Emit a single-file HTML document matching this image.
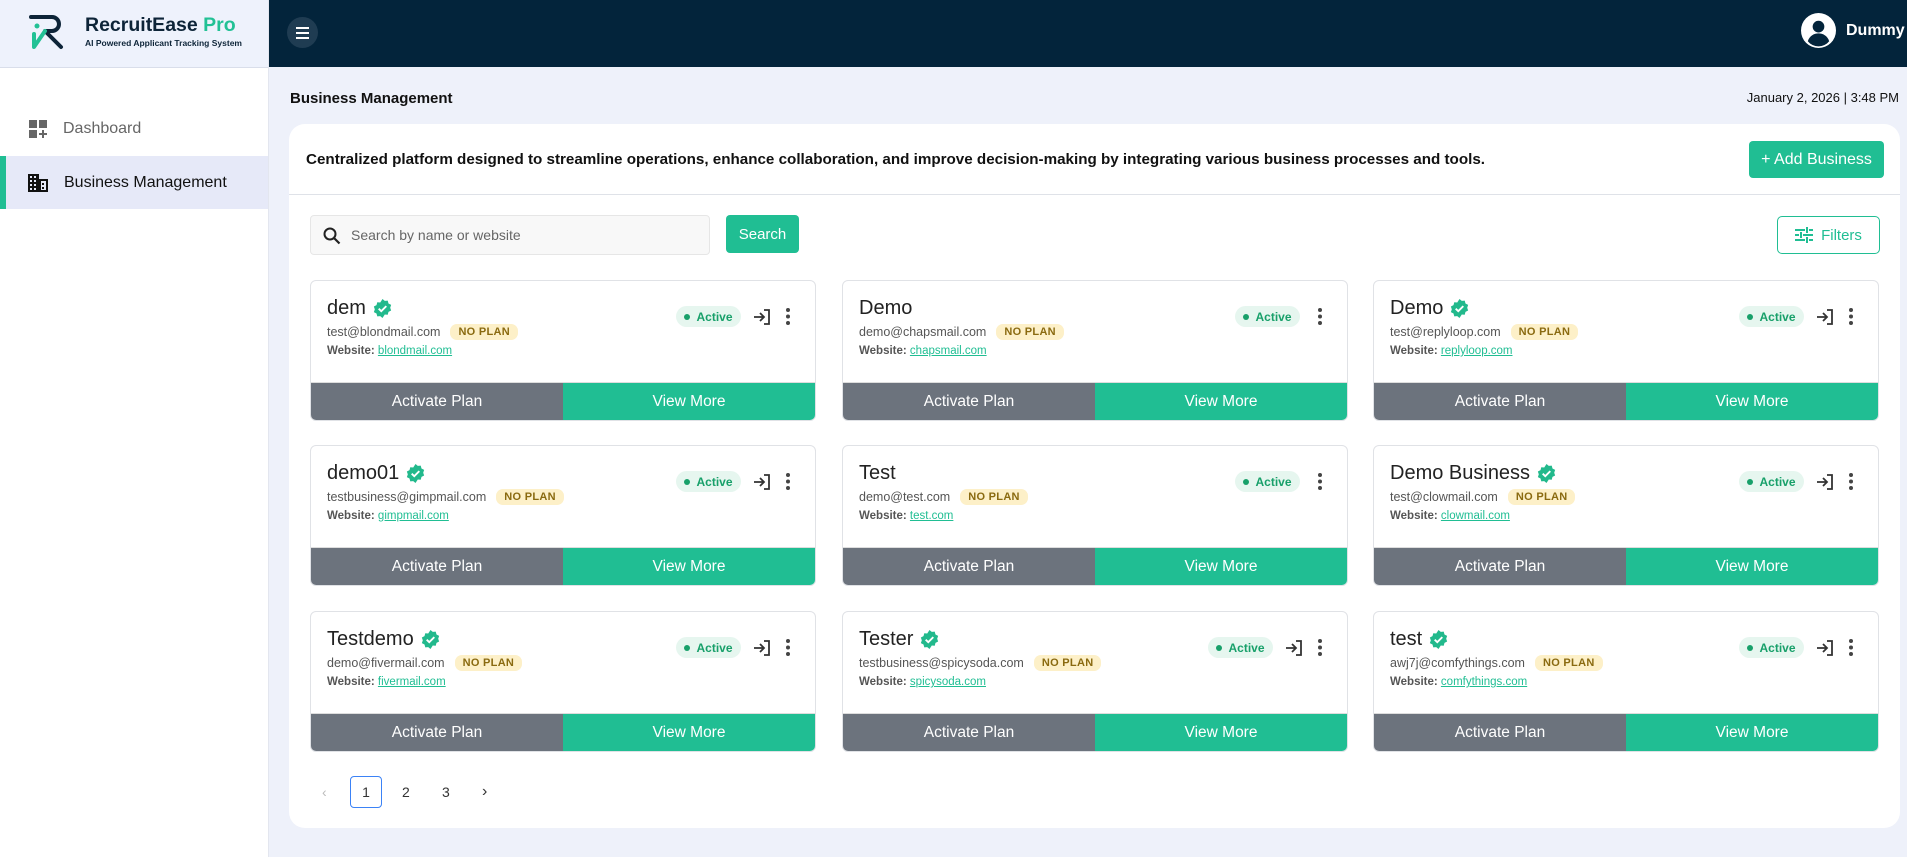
<!DOCTYPE html>
<html><head><meta charset="utf-8">
<style>
*{box-sizing:border-box;margin:0;padding:0}
body{width:1907px;height:857px;overflow:hidden;background:#eef1fa;font-family:"Liberation Sans",sans-serif;position:relative;color:#111}
.side{position:absolute;left:0;top:0;width:269px;height:857px;background:#fff;border-right:1px solid #e3e6ef}
.logo{height:68px;background:#eef2fc;border-bottom:1px solid #d9deea;position:relative}
.brand{position:absolute;left:85px;top:14px;font-weight:bold;font-size:19.5px;color:#0d2438}
.brand span{color:#22c195}
.sub{position:absolute;left:85px;top:38px;font-size:8.5px;color:#0d2438;font-weight:bold}
.nav{position:absolute;left:0;width:268px;height:53px;display:flex;align-items:center;font-size:16px}
.top{position:absolute;left:269px;top:0;right:0;height:67px;background:#03243b}
.ham{position:absolute;left:18px;top:17px;width:31px;height:31px;border-radius:50%;background:#1f3c52}
.ham i{position:absolute;left:9px;width:13px;height:2px;background:#fff}
.title{position:absolute;left:290px;top:90px;font-size:15px;font-weight:bold}
.date{position:absolute;right:8px;top:90px;font-size:13px}
.main{position:absolute;left:289px;top:124px;width:1611px;height:704px;background:#fff;border-radius:16px}
.desc{position:absolute;left:17px;top:27px;font-size:15.2px;font-weight:bold}
.add{position:absolute;left:1460px;top:17px;width:135px;height:37px;background:#20be93;color:#fff;border-radius:4px;font-size:16px;display:flex;align-items:center;justify-content:center}
.hr{position:absolute;left:0;right:0;top:70px;height:1px;background:#dfe2e8}
.search{position:absolute;left:21px;top:91px;width:400px;height:40px;background:#f8f8f8;border:1px solid #e6e6e6;border-radius:4px;font-size:14px;color:#666;padding-left:40px;line-height:38px}
.sbtn{position:absolute;left:437px;top:91px;width:73px;height:38px;background:#20be93;color:#fff;border-radius:4px;font-size:15px;display:flex;align-items:center;justify-content:center}
.filt{position:absolute;left:1488px;top:92px;width:103px;height:38px;border:1px solid #20be93;border-radius:5px;color:#20be93;font-size:15px;display:flex;align-items:center;justify-content:center;gap:8px}
.card{position:absolute;width:506px;height:141px;border:1px solid #e0e2e6;border-radius:6px;background:#fff;overflow:hidden}
.card .n{position:absolute;left:16px;top:16px;font-size:20px;color:#222;display:flex;align-items:center;gap:7px}
.card .e{position:absolute;left:16px;top:43px;font-size:12.5px;color:#555;display:flex;align-items:center;gap:10px}
.np{background:#fdf0c8;color:#8a6a10;font-size:11px;font-weight:bold;padding:2px 8px;border-radius:7px;letter-spacing:.3px}
.card .w{position:absolute;left:16px;top:64px;font-size:11.5px;color:#555}
.card .w b{color:#555}
.card .w u{color:#20be93}
.pill{position:absolute;top:25px;width:65px;height:21px;background:#e6f6ef;color:#18a06a;border-radius:11px;font-size:12px;font-weight:bold;display:flex;align-items:center;justify-content:center;gap:6px}
.pill i{width:6px;height:6px;border-radius:50%;background:#18a06a}
.btns{position:absolute;left:0;right:0;bottom:0;height:38px;display:flex;border-top:1px solid #ddd}
.btns div{flex:1;display:flex;align-items:center;justify-content:center;color:#fff;font-size:15.5px}
.a{background:#6c737d}.v{background:#20be93}
.pg{position:absolute;font-size:14px;color:#333}
</style></head><body>
<div class="side">
 <div class="logo">
  <svg style="position:absolute;left:28px;top:14px" width="42" height="36" viewBox="0 0 42 36"><path d="M3 3H24a7 7 0 0 1 0 14H17L33 33" fill="none" stroke="#0d2438" stroke-width="4" stroke-linecap="round" stroke-linejoin="round"/><path d="M6 20V33L17 17" fill="none" stroke="#22c195" stroke-width="4" stroke-linecap="round" stroke-linejoin="round"/><circle cx="9" cy="12" r="2.5" fill="#22c195"/></svg>
  <div class="brand">RecruitEase <span>Pro</span></div>
  <div class="sub">AI Powered Applicant Tracking System</div>
 </div>
 <div class="nav" style="top:102px;color:#666">
  <svg style="margin-left:29px" width="18" height="18" viewBox="0 0 18 18" fill="#666"><rect x="0" y="0" width="8" height="8"/><rect x="10" y="0" width="8" height="8"/><rect x="0" y="10" width="8" height="8"/><path d="M13 10h2v3h3v2h-3v3h-2v-3h-3v-2h3z"/></svg>
  <span style="margin-left:16px">Dashboard</span></div>
 <div class="nav" style="top:156px;background:#e6e9f8;border-left:6px solid #20be93;color:#111">
  <svg style="margin-left:22px" width="20" height="18" viewBox="0 0 20 18" fill="#111"><path d="M0 0h11v5h9v13H0z"/><g fill="#e6e9f8"><rect x="2" y="2" width="2" height="2"/><rect x="6" y="2" width="2" height="2"/><rect x="2" y="6" width="2" height="2"/><rect x="6" y="6" width="2" height="2"/><rect x="2" y="10" width="2" height="2"/><rect x="6" y="10" width="2" height="2"/><rect x="2" y="14" width="2" height="2"/><rect x="6" y="14" width="2" height="2"/><rect x="13" y="7" width="5" height="9"/></g><rect x="14" y="9" width="2" height="2"/><rect x="14" y="13" width="2" height="2"/></svg>
  <span style="margin-left:16px">Business Management</span></div>
</div>
<div class="top">
 <div class="ham"><i style="top:10px"></i><i style="top:15px"></i><i style="top:20px"></i></div>
 <svg style="position:absolute;left:1532px;top:13px" width="35" height="35" viewBox="0 0 36 36"><circle cx="18" cy="18" r="18" fill="#fff"/><circle cx="18" cy="14" r="6" fill="#03243b"/><path d="M7 29c2-6 7-8 11-8s9 2 11 8a14 14 0 0 1-22 0z" fill="#03243b"/></svg>
 <div style="position:absolute;left:1577px;top:22px;color:#fff;font-weight:bold;font-size:16px">Dummy</div>
</div>
<div class="title">Business Management</div>
<div class="date">January 2, 2026 | 3:48 PM</div>
<div class="main">
 <div class="desc">Centralized platform designed to streamline operations, enhance collaboration, and improve decision-making by integrating various business processes and tools.</div>
 <div class="add">+ Add Business</div>
 <div class="hr"></div>
 <div class="search"><svg style="position:absolute;left:12px;top:11px" width="18" height="18" viewBox="0 0 18 18"><circle cx="7" cy="7" r="5.5" fill="none" stroke="#222" stroke-width="2"/><path d="M11 11l5.5 5.5" stroke="#222" stroke-width="2.2"/></svg>Search by name or website</div>
 <div class="sbtn">Search</div>
 <div class="filt"><svg width="18" height="16" viewBox="0 0 18 16" stroke="#20be93" stroke-width="2"><path d="M0 3h10M14 3h4M12 0v6M0 8h4M8 8h10M6 5v6M0 13h10M14 13h4M12 10v6"/></svg>Filters</div>
</div>
<div id="cards"></div>
<div class="pg" style="left:322px;top:784px;color:#bbb">&lsaquo;</div>
<div class="pg" style="left:350px;top:776px;width:32px;height:32px;border:1px solid #3b82f6;border-radius:4px;display:flex;align-items:center;justify-content:center">1</div>
<div class="pg" style="left:402px;top:784px">2</div>
<div class="pg" style="left:442px;top:784px">3</div>
<div class="pg" style="left:482px;top:783px;font-size:16px">&rsaquo;</div>
<script>
var d=[["dem","test@blondmail.com","blondmail.com",1],["Demo","demo@chapsmail.com","chapsmail.com",0],["Demo","test@replyloop.com","replyloop.com",1],
["demo01","testbusiness@gimpmail.com","gimpmail.com",1],["Test","demo@test.com","test.com",0],["Demo Business","test@clowmail.com","clowmail.com",1],
["Testdemo","demo@fivermail.com","fivermail.com",1],["Tester","testbusiness@spicysoda.com","spicysoda.com",1],["test","awj7j@comfythings.com","comfythings.com",1]];
var xs=[310,842,1373],ys=[280,445,611],h="";
var chk='<svg width="19" height="19" viewBox="0 0 20 20"><path d="M10 0l2.4 2 3.1-.3.8 3 2.8 1.5-1 3 1 2.9-2.8 1.5-.8 3-3.1-.3L10 20l-2.4-2-3.1.3-.8-3L.9 13.8l1-2.9-1-3 2.8-1.5.8-3 3.1.3z" fill="#22b98c"/><path d="M6 10.2l2.7 2.6L14 7.5" fill="none" stroke="#fff" stroke-width="2"/></svg>';
d.forEach(function(c,i){var x=xs[i%3],y=ys[Math.floor(i/3)];var px=419;
h+='<div class="card" style="left:'+x+'px;top:'+y+'px"><div class="n">'+c[0]+(c[3]?chk:'')+'</div><div class="e">'+c[1]+'<span class="np">NO PLAN</span></div><div class="w"><b>Website:</b> <u>'+c[2]+'</u></div>'+
'<div class="pill" style="left:'+(c[3]?px-54:392)+'px"><i></i>Active</div>'+
(c[3]?'<svg style="position:absolute;left:'+(px+23)+'px;top:28px" width="18" height="16" viewBox="0 0 18 16" fill="none" stroke="#333" stroke-width="1.8"><path d="M11 1h5v14h-5M1 8h10M7 4l4 4-4 4"/></svg>':'')+
'<svg style="position:absolute;left:'+(px+56)+'px;top:27px" width="4" height="17" viewBox="0 0 4 17" fill="#444"><circle cx="2" cy="2" r="2"/><circle cx="2" cy="8.5" r="2"/><circle cx="2" cy="15" r="2"/></svg>'+
'<div class="btns"><div class="a">Activate Plan</div><div class="v">View More</div></div></div>';});
document.getElementById("cards").innerHTML=h;
</script>
</body></html>
